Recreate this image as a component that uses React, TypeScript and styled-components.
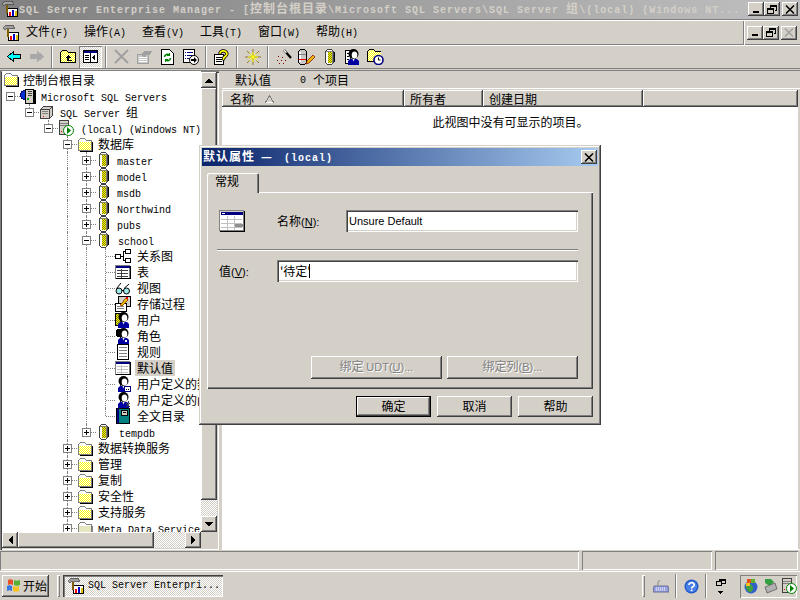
import React from "react";
import styled, { createGlobalStyle, css } from "styled-components";

const CJK = `"Noto Sans CJK SC", "Liberation Sans", sans-serif`;
const MONO = `"Liberation Mono", "Noto Sans CJK SC", monospace`;
const SANS = `"Liberation Sans", "Noto Sans CJK SC", sans-serif`;
const FACE = "#d4d0c8";
const DITHER = `repeating-conic-gradient(#ffffff 0 25%, #d4d0c8 0 50%) 0 0 / 2px 2px`;

const raised = css`
  background: ${FACE};
  box-shadow: inset -1px -1px 0 #404040, inset 1px 1px 0 #ffffff, inset -2px -2px 0 #808080;
`;
const sunken = css`
  box-shadow: inset 1px 1px 0 #808080, inset 2px 2px 0 #404040, inset -1px -1px 0 #ffffff, inset -2px -2px 0 ${FACE};
`;
const thinSunken = css`
  box-shadow: inset 1px 1px 0 #808080, inset -1px -1px 0 #ffffff;
`;

const Global = createGlobalStyle`
  html, body { margin: 0; padding: 0; background: ${FACE}; overflow: hidden; }
  * { box-sizing: border-box; }
`;

const Screen = styled.div`
  position: relative;
  width: 800px;
  height: 600px;
  overflow: hidden;
  display: flex;
  flex-direction: column;
  background: ${FACE};
  font-family: ${CJK};
  font-size: 12px;
  color: #000;
  line-height: 16px;
`;
const L = styled.span`
  font-family: ${MONO};
  font-size: 10px;
`;
const S = styled.span`
  font-family: ${SANS};
  font-size: 11px;
`;

/* ---------- window chrome ---------- */
const TitleBar = styled.div`
  height: 19px;
  flex: none;
  display: flex;
  align-items: center;
  padding: 0 2px 1px 2px;
  background: linear-gradient(to right, #808080, #c0c0c0);
`;
const TitleText = styled.div`
  flex: 1;
  margin-left: 1px;
  overflow: hidden;
  white-space: nowrap;
  font-weight: 700;
  letter-spacing: 1px;
  color: ${FACE};
`;
const CaptionGroup = styled.div`
  display: flex;
  align-items: center;
`;
const CapBtn = styled.div<{ $gap?: number }>`
  ${raised}
  width: 16px;
  height: 14px;
  margin-left: ${(p) => p.$gap ?? 0}px;
  display: flex;
  align-items: center;
  justify-content: center;
`;
const MenuBar = styled.div`
  height: 26px;
  flex: none;
  display: flex;
  align-items: center;
  padding-left: 3px;
  border-top: 1px solid #808080;
  box-shadow: inset 0 1px 0 #fff, inset 0 -1px 0 #808080;
`;
const MenuIcon = styled.div`
  width: 23px;
  display: flex;
`;
const MenuItem = styled.div`
  width: 58px;
  white-space: nowrap;
`;
const MenuSpacer = styled.div`
  flex: 1;
`;
const MdiButtons = styled.div`
  height: 24px;
  display: flex;
  align-items: center;
  padding: 0 3px 0 3px;
  border-left: 1px solid #808080;
  box-shadow: inset 1px 0 0 #fff;
`;
const ToolBar = styled.div`
  height: 23px;
  flex: none;
  display: flex;
  align-items: center;
  padding-left: 2px;
  box-shadow: inset 0 1px 0 #fff;
`;
const ToolBtn = styled.div<{ $pressed?: boolean }>`
  width: 23px;
  height: 22px;
  display: flex;
  align-items: center;
  justify-content: center;
  ${(p) =>
    p.$pressed &&
    css`
      background: ${DITHER};
      box-shadow: inset 1px 1px 0 #808080, inset -1px -1px 0 #fff;
    `}
`;
const ToolSep = styled.div`
  width: 8px;
  height: 22px;
  display: flex;
  justify-content: center;
  &::before {
    content: "";
    width: 2px;
    height: 100%;
    box-shadow: inset 1px 0 0 #808080, inset -1px 0 0 #fff;
  }
`;
const Etch = styled.div`
  height: 3px;
  flex: none;
  border-top: 1px solid #808080;
  border-bottom: 1px solid #808080;
`;
const Workspace = styled.div`
  height: 479px;
  flex: none;
  display: flex;
  gap: 3px;
`;

/* ---------- tree ---------- */
const LeftPane = styled.div`
  width: 219px;
  flex: none;
  display: grid;
  grid-template-columns: 199px 16px;
  grid-template-rows: 1fr 16px;
  padding: 0 2px 2px 2px;
  position: relative;
  ${sunken}
`;
const TreeView = styled.div`
  background: #fff;
  overflow: hidden;
  min-width: 0;
  min-height: 0;
`;
const RootRow = styled.div`
  height: 17px;
  display: flex;
  align-items: center;
  padding-left: 1px;
  white-space: nowrap;
  gap: 4px;
`;
const Row = styled.div`
  height: 16px;
  display: flex;
  align-items: center;
  white-space: nowrap;
  margin-left: -1px;
`;
const Cell = styled.div<{ $line?: "full" | "half" | "none"; $tick?: boolean }>`
  position: relative;
  width: 19px;
  height: 16px;
  flex: none;
  display: flex;
  align-items: center;
  justify-content: center;
  &::before {
    content: "";
    position: absolute;
    left: 9px;
    top: 0;
    height: ${(p) => (p.$line === "half" ? "8px" : "16px")};
    border-left: ${(p) => (p.$line && p.$line !== "none" ? "1px dotted #808080" : "0")};
  }
  &::after {
    content: "";
    position: absolute;
    left: 10px;
    top: 8px;
    width: 9px;
    border-top: ${(p) => (p.$tick ? "1px dotted #808080" : "0")};
  }
`;
const Box = styled.div`
  position: relative;
  z-index: 1;
  width: 9px;
  height: 9px;
  background: #fff;
  border: 1px solid #808080;
  display: flex;
  align-items: center;
  justify-content: center;
`;
const RowIcon = styled.div`
  width: 16px;
  height: 16px;
  flex: none;
  display: flex;
  align-items: center;
  justify-content: center;
`;
const RowLabel = styled.div<{ $selected?: boolean; $shift?: number }>`
  margin-left: ${(p) => 3 + (p.$shift ?? 0)}px;
  padding: 0 2px;
  height: 16px;
  background: ${(p) => (p.$selected ? FACE : "transparent")};
`;

/* ---------- scrollbars ---------- */
const VScroll = styled.div`
  display: flex;
  flex-direction: column;
  margin-top: 1px;
  background: ${DITHER};
`;
const HScroll = styled.div`
  display: flex;
  background: ${DITHER};
`;
const ScrollBtn = styled.div`
  ${raised}
  width: 16px;
  height: 16px;
  flex: none;
  display: flex;
  align-items: center;
  justify-content: center;
`;
const VThumb = styled.div`
  ${raised}
  height: 412px;
  flex: none;
`;
const HThumb = styled.div`
  ${raised}
  width: 136px;
  flex: none;
`;
const Grow = styled.div`
  flex: 1;
`;
const Corner = styled.div`
  background: ${FACE};
`;

/* ---------- list ---------- */
const RightPane = styled.div`
  flex: 1;
  display: flex;
  flex-direction: column;
  min-width: 0;
`;
const ListCaption = styled.div`
  height: 18px;
  flex: none;
  display: flex;
  align-items: center;
  padding-left: 13px;
  border-bottom: 1px solid #fff;
`;
const CaptionName = styled.div`
  width: 65px;
`;
const CaptionCount = styled.div`
  width: 13px;
`;
const ListFrame = styled.div`
  flex: 1;
  display: flex;
  flex-direction: column;
  padding: 1px 2px 0 0;
  border-bottom: 1px solid #fff;
`;
const HeaderRow = styled.div`
  height: 17px;
  flex: none;
  display: flex;
`;
const HeaderCell = styled.div<{ $w?: number; $pad?: number }>`
  ${raised}
  ${(p) => (p.$w ? `width: ${p.$w}px; flex: none;` : "flex: 1;")}
  display: flex;
  align-items: center;
  gap: 11px;
  padding-left: ${(p) => p.$pad ?? 6}px;
  white-space: nowrap;
`;
const ListBody = styled.div`
  flex: 1;
  background: #fff;
  padding: 7px 0 0 1px;
  text-align: center;
`;

/* ---------- status + taskbar ---------- */
const StatusBar = styled.div`
  height: 21px;
  flex: none;
  display: flex;
  gap: 3px;
  padding: 1px 2px 1px 0;
`;
const StatusPanel = styled.div<{ $w?: number }>`
  ${(p) => (p.$w ? `width: ${p.$w}px; flex: none;` : "flex: 1;")}
  ${thinSunken}
`;
const Taskbar = styled.div`
  flex: 1;
  display: flex;
  align-items: center;
  padding: 2px 3px 4px 2px;
  border-top: 1px solid #fff;
`;
const StartButton = styled.div`
  ${raised}
  width: 47px;
  height: 22px;
  flex: none;
  display: flex;
  align-items: center;
  padding: 0 0 1px 3px;
`;
const Grip = styled.div<{ $l: number; $r: number }>`
  width: 3px;
  height: 22px;
  flex: none;
  margin: 0 ${(p) => p.$r}px 0 ${(p) => p.$l}px;
  box-shadow: inset 1px 1px 0 #fff, inset -1px -1px 0 #808080;
`;
const TaskButton = styled.div`
  width: 160px;
  height: 22px;
  flex: none;
  display: flex;
  align-items: center;
  gap: 4px;
  padding-left: 5px;
  background: ${DITHER};
  box-shadow: inset 1px 1px 0 #404040, inset 2px 2px 0 #808080, inset -1px -1px 0 #fff;
  white-space: nowrap;
  overflow: hidden;
`;
const TaskSpacer = styled.div`
  flex: 1;
`;
const TrayIcon = styled.div`
  width: 16px;
  height: 16px;
  flex: none;
  display: flex;
  align-items: center;
  justify-content: center;
`;
const TrayDivider = styled.div`
  width: 2px;
  height: 24px;
  flex: none;
  margin: 0 6px;
  box-shadow: inset 1px 0 0 #808080, inset -1px 0 0 #fff;
`;
const Tray = styled.div`
  ${thinSunken}
  width: 57px;
  height: 23px;
  flex: none;
  margin-left: 11px;
  display: flex;
  align-items: center;
  padding-left: 3px;
  gap: 3px;
`;

/* ---------- dialog ---------- */
const Dialog = styled.div`
  background: ${FACE};
  box-shadow: inset -1px -1px 0 #404040, inset 1px 1px 0 ${FACE}, inset -2px -2px 0 #808080, inset 2px 2px 0 #fff;
  position: absolute;
  left: 199px;
  top: 145px;
  width: 402px;
  height: 280px;
  padding: 3px 3px 0;
  display: flex;
  flex-direction: column;
  font-family: ${CJK};
`;
const DialogTitle = styled.div`
  height: 18px;
  flex: none;
  display: flex;
  align-items: center;
  justify-content: space-between;
  padding: 0 1px 0 1px;
  background: linear-gradient(to right, #0a246a, #a6caf0);
  color: #fff;
  font-weight: 700;
  letter-spacing: 1px;
  white-space: nowrap;
`;
const TitleDash = styled.span`
  margin: 0 11px 0 6px;
`;
const Tabs = styled.div`
  margin: 7px 5px 0;
  display: flex;
  flex-direction: column;
`;
const Tab = styled.div`
  position: relative;
  z-index: 1;
  width: 52px;
  height: 20px;
  margin-bottom: -1px;
  padding-left: 8px;
  background: ${FACE};
  border-radius: 2px 2px 0 0;
  box-shadow: inset 1px 1px 0 #fff, inset -1px 0 0 #404040, inset -2px 0 0 #808080;
`;
const TabPanel = styled.div`
  height: 197px;
  display: flex;
  flex-direction: column;
  padding: 18px 15px 10px 12px;
  box-shadow: inset 1px 1px 0 #fff, inset -1px -1px 0 #404040, inset -2px -2px 0 #808080;
`;
const FieldRow = styled.div`
  display: flex;
  align-items: center;
  height: 22px;
`;
const FieldIcon = styled.div`
  width: 58px;
  flex: none;
  display: flex;
`;
const FieldLabel = styled.div<{ $w: number }>`
  width: ${(p) => p.$w}px;
  flex: none;
  white-space: nowrap;
`;
const TextField = styled.div`
  ${sunken}
  flex: 1;
  height: 22px;
  background: #fff;
  display: flex;
  align-items: center;
  padding: 0 3px;
  white-space: nowrap;
`;
const Caret = styled.span`
  display: inline-block;
  width: 1px;
  height: 14px;
  margin-left: -2px;
  background: #000;
`;
const Rule = styled.div`
  height: 2px;
  flex: none;
  margin: 17px 0 9px -2px;
  background: linear-gradient(#808080 50%, #fff 50%);
`;
const Spacer = styled.div`
  flex: 1;
`;
const BindRow = styled.div`
  display: flex;
  justify-content: flex-end;
  gap: 5px;
`;
const Button = styled.button<{ $w: number; $h: number; $disabled?: boolean; $default?: boolean }>`
  ${raised}
  width: ${(p) => p.$w}px;
  height: ${(p) => p.$h}px;
  padding: 0 0 2px;
  border: ${(p) => (p.$default ? "1px solid #000" : "0")};
  font-family: ${CJK};
  font-size: 12px;
  line-height: 14px;
  color: ${(p) => (p.$disabled ? "#808080" : "#000")};
  text-shadow: ${(p) => (p.$disabled ? "1px 1px 0 #fff" : "none")};
`;
const DialogFooter = styled.div`
  display: flex;
  justify-content: flex-end;
  gap: 6px;
  margin: 7px 5px 0 0;
`;

/* ---------- icons ---------- */
const SvgBase = styled.svg`
  display: block;
  flex: none;
`;
const Svg: React.FC<{ w: number; h: number; children: React.ReactNode }> = ({ w, h, children }) => (
  <SvgBase width={w} height={h} viewBox={`0 0 ${w} ${h}`} shapeRendering="crispEdges">
    {children}
  </SvgBase>
);

/* a rectangle of two colours in a one-pixel checker, as a 16-colour icon is dithered */
const Check = ({ x, y, w, h, a, b }: { x: number; y: number; w: number; h: number; a: string; b: string }) => {
  let d = "";
  for (let j = 0; j < h; j++) {
    for (let i = 0; i < w; i++) {
      if ((i + j) % 2 === 0) d += `M${x + i} ${y + j}h1v1h-1z`;
    }
  }
  return (
    <>
      <rect x={x} y={y} width={w} height={h} fill={a} />
      <path d={d} fill={b} />
    </>
  );
};

const Folder = ({ gray }: { gray?: boolean }) => (
  <Svg w={16} h={15}>
    <path d="M1.5 3.5l2-2h4l2 2h4.5v10H1.5z" fill="#fff" stroke="#808080" />
    {gray ? (
      <rect x="2" y="5" width="12" height="8" fill="#e6e6c0" />
    ) : (
      <Check x={2} y={5} w={12} h={8} a="#ffff00" b="#ffffff" />
    )}
    <path d="M2.5 4.5H9" stroke="#fff" />
    <path d="M15 4.5v10H2.5" fill="none" stroke={gray ? "#808080" : "#000"} />
  </Svg>
);
const Db = () => (
  <Svg w={12} h={16}>
    <path d="M1.5 2.5l2-2h4l2 2v11l-2 2h-4l-2-2z" fill="#fff" stroke="#404040" />
    <Check x={4} y={3} w={4} h={11} a="#ffff00" b="#808000" />
    <rect x="8" y="3" width="1" height="11" fill="#808080" />
    <path d="M10.5 3v10" stroke="#000" />
    <path d="M2 2.5h7" stroke="#808080" />
  </Svg>
);
const Hammer = () => (
  <Svg w={16} h={16}>
    <rect x="5.5" y="7.5" width="10" height="8" fill="#fff" stroke="#000" />
    <rect x="7" y="11" width="2" height="4" fill="#ff0000" />
    <rect x="10" y="9" width="2" height="6" fill="#0000c0" />
    <rect x="13" y="10" width="2" height="5" fill="#e0c000" />
    <path d="M0 3l3-3h7l2 3-2 1-2-1H4L2 5z" fill="#a0a0a0" stroke="#404040" strokeWidth="0.7" />
    <path d="M5 4v8" stroke="#806000" strokeWidth="2" />
  </Svg>
);
const MsSql = () => (
  <Svg w={16} h={15}>
    <circle cx="5" cy="6" r="4.5" fill="#0030d0" stroke="#000080" />
    <rect x="5.5" y="0.5" width="8" height="14" fill={FACE} stroke="#000" />
    <rect x="8" y="2" width="4" height="1" fill="#404040" />
    <rect x="8" y="4" width="4" height="1" fill="#404040" />
    <rect x="8" y="6" width="4" height="1" fill="#404040" />
    <rect x="14" y="1" width="2" height="14" fill="#000" />
    <rect x="7" y="9" width="2" height="2" fill="#00a000" />
  </Svg>
);
const Server = () => (
  <Svg w={16} h={16}>
    <rect x="1.5" y="0.5" width="9" height="14" fill={FACE} stroke="#404040" />
    <rect x="2" y="3" width="8" height="1" fill="#808080" />
    <rect x="2" y="5" width="8" height="1" fill="#808080" />
    <rect x="3" y="11" width="1" height="1" fill="#f00" />
    <g shapeRendering="auto">
      <circle cx="10.5" cy="10.5" r="5" fill="#fff" stroke="#008000" />
      <path d="M9 7l4 3.5-4 3.5z" fill="#008000" />
    </g>
  </Svg>
);
const SqlGroup = () => (
  <Svg w={16} h={15}>
    <path d="M1.5 4.5l3-3h9v9l-3 3h-9z" fill={FACE} stroke="#404040" />
    <path d="M1.5 4.5h9v9M10.5 4.5l3-3" fill="none" stroke="#404040" />
    <rect x="3" y="6" width="6" height="1" fill="#808080" />
    <rect x="3" y="8" width="6" height="1" fill="#808080" />
    <rect x="4" y="11" width="1" height="1" fill="#f00" />
  </Svg>
);
const Diagram = () => (
  <Svg w={16} h={14}>
    <rect x="0.5" y="5.5" width="5" height="4" fill="#fff" stroke="#000" />
    <rect x="10.5" y="0.5" width="5" height="4" fill="#fff" stroke="#000" />
    <rect x="10.5" y="9.5" width="5" height="4" fill="#fff" stroke="#000" />
    <path d="M5 7h3M8 2.5v9M8 2.5h2M8 11.5h2" stroke="#000" fill="none" />
  </Svg>
);
const TableIco = ({ faint }: { faint?: boolean }) => (
  <Svg w={16} h={14}>
    <rect x="0.5" y="0.5" width="14" height="13" fill="#fff" stroke="#808080" />
    <path d="M15.5 1v13M1 13.5h15" stroke="#000" fill="none" />
    <rect x="1" y="1" width="14" height="2" fill="#000080" />
    <path d="M2 5.5h11M2 8.5h11M2 11.5h11M6.5 4v9" stroke={faint ? "#c0c0c0" : "#404040"} fill="none" />
  </Svg>
);
const DefaultBig = () => (
  <Svg w={26} h={22}>
    <rect x="0.5" y="0.5" width="24" height="20" fill="#fff" stroke="#808080" />
    <path d="M25.5 1v21M1 21.5h25" stroke="#000" fill="none" />
    <path d="M1 1h23" stroke={FACE} />
    <rect x="2" y="2" width="22" height="3" fill="#000080" />
    <rect x="3" y="3" width="3" height="1" fill="#fff" />
    <path d="M2 9.5h21M2 13.5h21M2 17.5h21M8.5 6v14M15.5 6v14" stroke="#c0c0c0" fill="none" />
    <rect x="16" y="14" width="8" height="3" fill="#909090" />
  </Svg>
);
const Glasses = () => (
  <Svg w={16} h={13}>
    <g shapeRendering="auto">
      <circle cx="4" cy="9" r="3" fill="#a0e8e8" stroke="#000" />
      <circle cx="11.5" cy="9" r="3" fill="#a0e8e8" stroke="#000" />
      <path d="M7 8.5h1.5M1.5 6.5L6 1M9 6.5L14 2" stroke="#000" fill="none" />
    </g>
  </Svg>
);
const Proc = () => (
  <Svg w={16} h={16}>
    <rect x="3.5" y="0.5" width="12" height="10" fill={FACE} stroke="#000" />
    <rect x="0.5" y="7.5" width="11" height="8" fill="#fff" stroke="#000" />
    <path d="M2 10h7M2 12h7" stroke="#808080" />
    <path d="M5 9l6-7 2 2-6 6z" fill="#e0c000" stroke="#800000" strokeWidth="0.6" />
    <rect x="11" y="1" width="2" height="2" fill="#f00" />
  </Svg>
);
const Head = () => (
  <g shapeRendering="auto">
    <path d="M3 16v-4l2-2h7l2 2v4z" fill="#0000a0" />
    <path d="M7.5 10l1 2.5 1-2.5z" fill="#fff" />
    <ellipse cx="8.5" cy="5" rx="5" ry="5" fill="#000" />
    <path d="M5 10c1-2 0-4 0-5l1 2v3z" fill="#000" />
    <ellipse cx="9.5" cy="6" rx="2.8" ry="3.6" fill="#fff" />
  </g>
);
const UserIco = () => (
  <Svg w={16} h={16}>
    <rect x="0.5" y="1.5" width="6" height="12" fill="#fff" stroke="#000" />
    <Check x={1} y={2} w={5} h={11} a="#ffff00" b="#808000" />
    <Head />
  </Svg>
);
const RoleIco = () => (
  <Svg w={16} h={16}>
    <ellipse cx="5" cy="5" rx="4.5" ry="4.5" fill="#000" />
    <Head />
    <rect x="10" y="12" width="2" height="2" fill="#fff" />
  </Svg>
);
const RuleIco = () => (
  <Svg w={14} h={16}>
    <rect x="1.5" y="0.5" width="11" height="15" fill="#fff" stroke="#000" />
    <path d="M3 3.5h8M3 6.5h8M3 9.5h8M3 12.5h8" stroke="#808080" />
  </Svg>
);
const TypeIco = () => (
  <Svg w={16} h={16}>
    <Head />
    <rect x="9.5" y="10.5" width="6" height="5" fill="#fff" stroke="#000080" />
    <path d="M11 13h1M13 13h1" stroke="#000" />
  </Svg>
);
const FuncIco = () => (
  <Svg w={16} h={16}>
    <Head />
    <path d="M11 11l4 4M15 11l-4 4M13 9v2" stroke="#404040" />
  </Svg>
);
const Catalog = () => (
  <Svg w={15} h={16}>
    <rect x="0.5" y="0.5" width="13" height="15" fill="#008080" stroke="#000" />
    <rect x="1" y="1" width="2" height="14" fill="#000080" />
    <rect x="5.5" y="2.5" width="6" height="5" fill={FACE} stroke="#000" />
    <rect x="7" y="4" width="3" height="1" fill="#000" />
  </Svg>
);
const Minus = () => (
  <Svg w={7} h={7}>
    <path d="M1 3.5h5" stroke="#000" />
  </Svg>
);
const Plus = () => (
  <Svg w={7} h={7}>
    <path d="M1 3.5h5M3.5 1v5" stroke="#000" />
  </Svg>
);

/* caption glyphs */
const GMin = () => (
  <Svg w={10} h={9}>
    <rect x="2" y="6" width="6" height="2" fill="#000" />
  </Svg>
);
const GRestore = () => (
  <Svg w={10} h={9}>
    <path d="M3.5 2.5v-2h6v5h-2M3 1h6" fill="none" stroke="#000" />
    <rect x="0.5" y="3.5" width="6" height="5" fill="none" stroke="#000" />
    <path d="M1 4.5h5" stroke="#000" />
  </Svg>
);
const GClose = ({ off }: { off?: boolean }) => (
  <Svg w={10} h={9}>
    <g shapeRendering="auto" stroke={off ? "#a0a0a0" : "#000"} strokeWidth="1.5">
      <path d="M1 0.5l8 8M9 0.5l-8 8" />
    </g>
  </Svg>
);
const TriUp = () => (
  <Svg w={8} h={5}>
    <path d="M4 0l4 5H0z" fill="#000" />
  </Svg>
);
const TriDown = () => (
  <Svg w={8} h={5}>
    <path d="M0 0h8L4 5z" fill="#000" />
  </Svg>
);
const TriLeft = () => (
  <Svg w={5} h={8}>
    <path d="M5 0v8L0 4z" fill="#000" />
  </Svg>
);
const TriRight = () => (
  <Svg w={5} h={8}>
    <path d="M0 0v8l5-4z" fill="#000" />
  </Svg>
);
const SortUp = () => (
  <Svg w={9} h={8}>
    <path d="M4.5 0.5l4 7h-8z" fill="none" stroke="#808080" />
    <path d="M8 7.5H0.5" stroke="#fff" />
  </Svg>
);

/* toolbar icons */
const TBack = () => (
  <Svg w={14} h={11}>
    <path d="M6.5 0.5v3h7v4h-7v3L.5 5.5z" fill="#00ffff" stroke="#000" strokeWidth="1" />
  </Svg>
);
const TForward = () => (
  <Svg w={14} h={11}>
    <path d="M7.5 0.5v3h-7v4h7v3l6-5z" fill="#a8a8a8" stroke="#a8a8a8" />
  </Svg>
);
const TUp = () => (
  <Svg w={16} h={15}>
    <path d="M0.5 3.5l2-2h4l2 2h6.5v10H0.5z" fill="#ffff80" stroke="#000" />
    <Check x={1} y={4} w={14} h={9} a="#ffff00" b="#ffffff" />
    <path d="M8 6L5 9h2v3h5v-1H9V9h2z" fill="#000" />
  </Svg>
);
const TPanes = () => (
  <Svg w={15} h={13}>
    <rect x="0.5" y="0.5" width="14" height="12" fill="#fff" stroke="#000" />
    <rect x="1" y="1" width="13" height="2" fill="#000080" />
    <path d="M7.5 3v9" stroke="#000" />
    <path d="M2 5.5h4M2 7.5h4M2 9.5h4" stroke="#000" />
    <path d="M12 5v5L9 7.5z" fill="#000" />
  </Svg>
);
const TDelete = () => (
  <Svg w={15} h={15}>
    <g shapeRendering="auto" stroke="#a0a0a0" strokeWidth="2">
      <path d="M1 1l13 13M14 1L1 14" />
    </g>
  </Svg>
);
const TProps = () => (
  <Svg w={16} h={14}>
    <rect x="0.5" y="4.5" width="11" height="9" fill="#c8c8c8" stroke="#a0a0a0" />
    <path d="M2 7h8M2 9h8M2 11h8" stroke="#fff" />
    <path d="M4 4l3-3h8l-2 4H9v2H6z" fill="#a0a0a0" />
  </Svg>
);
const TRefresh = () => (
  <Svg w={13} h={16}>
    <path d="M0.5 0.5h8l4 4v11H0.5z" fill="#fff" stroke="#000" />
    <g shapeRendering="auto" fill="none" stroke="#008000" strokeWidth="1.6">
      <path d="M3.5 8a3 3 0 0 1 5-2" />
      <path d="M9.5 9a3 3 0 0 1-5 2" />
    </g>
    <path d="M9 3v4H6zM4 14v-4h3z" fill="#008000" />
  </Svg>
);
const TExport = () => (
  <Svg w={16} h={16}>
    <rect x="0.5" y="0.5" width="11" height="13" fill="#fff" stroke="#000" />
    <path d="M2 3.5h1M4 3.5h6M2 6.5h1M4 6.5h6M2 9.5h1M4 9.5h3" stroke="#000080" />
    <g shapeRendering="auto">
      <circle cx="11" cy="11" r="4.5" fill="#fff" stroke="#000" />
      <path d="M8 10h3V8l3 3-3 3v-2H8z" fill="#000" />
    </g>
  </Svg>
);
const THelp = () => (
  <Svg w={15} h={16}>
    <path d="M0.5 5.5h9v10h-9z" fill="#fff" stroke="#000" />
    <path d="M2 8h6M2 10h6M2 12h6" stroke="#000" />
    <g shapeRendering="auto" fill="none" strokeLinecap="round">
      <path d="M6 4a3.5 3 0 1 1 5 3.5c-1 .7-1.5 1.3-1.5 2.5" stroke="#000" strokeWidth="3.4" />
      <path d="M6 4a3.5 3 0 1 1 5 3.5c-1 .7-1.5 1.3-1.5 2.5" stroke="#ffff00" strokeWidth="1.8" />
    </g>
  </Svg>
);
const TStar = () => (
  <Svg w={16} h={16}>
    <g shapeRendering="auto">
      <path d="M8 0v16M0 8h16M2 2l12 12M14 2L2 14" stroke="#806000" strokeWidth="0.8" />
      <path d="M8 3v10M3 8h10M4.5 4.5l7 7M11.5 4.5l-7 7" stroke="#ffff00" strokeWidth="1" />
    </g>
  </Svg>
);
const TWizard = () => (
  <Svg w={16} h={16}>
    <g shapeRendering="auto">
      <path d="M8 1l7 8" stroke="#000" strokeWidth="2.2" />
      <path d="M8 1l2.4 2.7" stroke="#fff" strokeWidth="1.4" />
    </g>
    <path d="M2 7h1M6 8h1M1 11h1M5 11h1M9 11h1M3 14h1M7 14h1" stroke="#800000" />
  </Svg>
);
const TDbEdit = () => (
  <Svg w={17} h={16}>
    <path d="M0.5 2.5l2-2h4l2 2v11l-2 2h-4l-2-2z" fill="#c8c8c8" stroke="#000" />
    <rect x="1" y="3" width="2" height="10" fill="#fff" />
    <rect x="1" y="5" width="7" height="1" fill="#808080" />
    <rect x="1" y="10" width="7" height="1" fill="#f00" />
    <g shapeRendering="auto">
      <path d="M8 15l1-3 6-6 2 2-6 6z" fill="#e8b800" stroke="#800000" strokeWidth="0.7" />
    </g>
  </Svg>
);
const TUser = () => (
  <Svg w={16} h={16}>
    <rect x="0.5" y="1.5" width="10" height="13" fill="#fff" stroke="#000" />
    <path d="M2 4.5h2M2 7.5h2M2 10.5h2" stroke="#000" />
    <Head />
  </Svg>
);
const TFolderClock = () => (
  <Svg w={17} h={16}>
    <path d="M0.5 2.5l2-2h4l2 2h5v10H.5z" fill="#ffff80" stroke="#000" />
    <Check x={1} y={3} w={13} h={9} a="#ffff00" b="#ffffff" />
    <g shapeRendering="auto">
      <circle cx="11.5" cy="11" r="4.5" fill="#fff" stroke="#000080" strokeWidth="1.6" />
      <path d="M11.5 8.5V11h2" fill="none" stroke="#000" />
    </g>
  </Svg>
);

/* taskbar icons */
const WinFlag = () => (
  <Svg w={18} h={15}>
    <g shapeRendering="auto">
      <path d="M3 2c2-1 3-1 5 0v5c-2-1-3-1-5 0z" fill="#e8502a" />
      <path d="M9 2c2 1 4 1 6 0v5c-2 1-4 1-6 0z" fill="#58b030" />
      <path d="M2 8c2-1 3-1 5 0v5c-2-1-3-1-5 0z" fill="#3878e0" />
      <path d="M8 8c2 1 4 1 6 0v5c-2 1-4 1-6 0z" fill="#f8c020" />
    </g>
  </Svg>
);
const KbIco = () => (
  <Svg w={16} h={16}>
    <g shapeRendering="auto">
      <path d="M5 7V4c0-1 2-1 2-2" fill="none" stroke="#808080" />
      <path d="M1 8h14l1 6H0z" fill="#9aa4e0" stroke="#505888" strokeWidth="0.8" />
      <path d="M3 10h10M3 12h10" stroke="#fff" strokeDasharray="1 1" />
    </g>
  </Svg>
);
const HelpBall = () => (
  <Svg w={15} h={15}>
    <g shapeRendering="auto">
      <circle cx="7.5" cy="7.5" r="7" fill="#2058c8" />
      <circle cx="7.5" cy="7.5" r="5.6" fill="#4880e8" />
      <path d="M5 6a2.6 2.2 0 1 1 3.8 1.8C8 8.3 7.6 8.7 7.6 9.6" fill="none" stroke="#fff" strokeWidth="1.6" />
      <rect x="6.8" y="10.5" width="1.7" height="1.7" fill="#fff" />
    </g>
  </Svg>
);
const DeskIco = () => (
  <Svg w={10} h={16}>
    <rect x="0.5" y="3.5" width="5" height="4" fill="none" stroke="#000" />
    <path d="M3.5 3V1.5h6v4H6M3.5 2.5h6" fill="none" stroke="#000" />
    <path d="M1 13h7l-3.5 3z" fill="#000" />
  </Svg>
);
const GlobeIco = () => (
  <Svg w={16} h={16}>
    <g shapeRendering="auto">
      <circle cx="8" cy="9" r="6.5" fill="#3060c8" />
      <path d="M3 6c3-1 6 0 7 3s-2 6-4 5-4-5-3-8z" fill="#40a040" />
      <path d="M4 1h4v4H4z" fill="#e05020" />
      <path d="M8 1h4v4H8z" fill="#60b030" />
      <path d="M3 5h4v3H3z" fill="#f8c020" />
    </g>
  </Svg>
);
const NetIco = () => (
  <Svg w={15} h={16}>
    <g shapeRendering="auto">
      <path d="M2 1h6l3 3-3 3H5L2 5z" fill="#30a040" />
      <path d="M2 9l10-4 2 6-10 4z" fill="#b0b0b0" stroke="#505050" strokeWidth="0.7" />
    </g>
  </Svg>
);

/* ---------- data ---------- */
type Line = "full" | "half" | "none";
interface Node {
  guides: Line[];
  kind: "plus" | "minus" | "leaf";
  line?: Line;
  icon: React.ReactNode;
  label: React.ReactNode;
  selected?: boolean;
  shift?: number;
}
const D3: Line[] = ["none", "none", "none"];
const D4: Line[] = [...D3, "full"];
const D5: Line[] = [...D4, "full"];

const tree: Node[] = [
  { guides: [], kind: "minus", icon: <MsSql />, label: <L>Microsoft SQL Servers</L> },
  { guides: ["none"], kind: "minus", line: "half", icon: <SqlGroup />, label: <><L>SQL Server </L>组</> },
  { guides: ["none", "none"], kind: "minus", line: "half", icon: <Server />, label: <L>(local) (Windows NT)</L>, shift: 2 },
  { guides: D3, kind: "minus", line: "full", icon: <Folder />, label: "数据库" },
  { guides: D4, kind: "plus", line: "full", icon: <Db />, label: <L>master</L> },
  { guides: D4, kind: "plus", line: "full", icon: <Db />, label: <L>model</L> },
  { guides: D4, kind: "plus", line: "full", icon: <Db />, label: <L>msdb</L> },
  { guides: D4, kind: "plus", line: "full", icon: <Db />, label: <L>Northwind</L> },
  { guides: D4, kind: "plus", line: "full", icon: <Db />, label: <L>pubs</L> },
  { guides: D4, kind: "minus", line: "full", icon: <Db />, label: <L>school</L>, shift: 1 },
  { guides: D5, kind: "leaf", line: "full", icon: <Diagram />, label: "关系图", shift: 1 },
  { guides: D5, kind: "leaf", line: "full", icon: <TableIco />, label: "表", shift: 1 },
  { guides: D5, kind: "leaf", line: "full", icon: <Glasses />, label: "视图", shift: 1 },
  { guides: D5, kind: "leaf", line: "full", icon: <Proc />, label: "存储过程", shift: 1 },
  { guides: D5, kind: "leaf", line: "full", icon: <UserIco />, label: "用户", shift: 1 },
  { guides: D5, kind: "leaf", line: "full", icon: <RoleIco />, label: "角色", shift: 1 },
  { guides: D5, kind: "leaf", line: "full", icon: <RuleIco />, label: "规则", shift: 1 },
  { guides: D5, kind: "leaf", line: "full", icon: <TableIco faint />, label: "默认值", selected: true, shift: 1 },
  { guides: D5, kind: "leaf", line: "full", icon: <TypeIco />, label: "用户定义的数据类型", shift: 1 },
  { guides: D5, kind: "leaf", line: "full", icon: <FuncIco />, label: "用户定义的函数", shift: 1 },
  { guides: D5, kind: "leaf", line: "half", icon: <Catalog />, label: "全文目录", shift: 1 },
  { guides: [...D3, "full"], kind: "plus", line: "half", icon: <Db />, label: <L>tempdb</L>, shift: 2 },
  { guides: D3, kind: "plus", line: "full", icon: <Folder />, label: "数据转换服务" },
  { guides: D3, kind: "plus", line: "full", icon: <Folder />, label: "管理" },
  { guides: D3, kind: "plus", line: "full", icon: <Folder />, label: "复制" },
  { guides: D3, kind: "plus", line: "full", icon: <Folder />, label: "安全性" },
  { guides: D3, kind: "plus", line: "full", icon: <Folder />, label: "支持服务" },
  { guides: D3, kind: "plus", line: "half", icon: <Folder gray />, label: <L>Meta Data Services</L> },
];

const menus: [string, string][] = [
  ["文件", "(F)"],
  ["操作", "(A)"],
  ["查看", "(V)"],
  ["工具", "(T)"],
  ["窗口", "(W)"],
  ["帮助", "(H)"],
];

const TreeRow = ({ n }: { n: Node }) => (
  <Row>
    {n.guides.map((g, i) => (
      <Cell key={i} $line={g} />
    ))}
    <Cell $line={n.line ?? "none"} $tick>
      {n.kind !== "leaf" && <Box>{n.kind === "plus" ? <Plus /> : <Minus />}</Box>}
    </Cell>
    <RowIcon>{n.icon}</RowIcon>
    <RowLabel $selected={n.selected} $shift={n.shift}>{n.label}</RowLabel>
  </Row>
);

export default function App() {
  return (
    <Screen>
      <Global />
      <TitleBar>
        <Hammer />
        <TitleText>
          <L>SQL Server Enterprise Manager - [</L>控制台根目录<L>\Microsoft SQL Servers\SQL Server </L>组<L>\(local) (Windows NT...</L>
        </TitleText>
        <CaptionGroup>
          <CapBtn><GMin /></CapBtn>
          <CapBtn><GRestore /></CapBtn>
          <CapBtn $gap={2}><GClose /></CapBtn>
        </CaptionGroup>
      </TitleBar>
      <MenuBar>
        <MenuIcon><Hammer /></MenuIcon>
        {menus.map(([t, k]) => (
          <MenuItem key={t}>
            {t}
            <L>{k}</L>
          </MenuItem>
        ))}
        <MenuSpacer />
        <MdiButtons>
          <CapBtn><GMin /></CapBtn>
          <CapBtn><GRestore /></CapBtn>
          <CapBtn $gap={2}><GClose off /></CapBtn>
        </MdiButtons>
      </MenuBar>
      <ToolBar>
        <ToolBtn><TBack /></ToolBtn>
        <ToolBtn><TForward /></ToolBtn>
        <ToolSep />
        <ToolBtn><TUp /></ToolBtn>
        <ToolBtn $pressed><TPanes /></ToolBtn>
        <ToolSep />
        <ToolBtn><TDelete /></ToolBtn>
        <ToolBtn><TProps /></ToolBtn>
        <ToolBtn><TRefresh /></ToolBtn>
        <ToolBtn><TExport /></ToolBtn>
        <ToolSep />
        <ToolBtn><THelp /></ToolBtn>
        <ToolSep />
        <ToolBtn><TStar /></ToolBtn>
        <ToolSep />
        <ToolBtn><TWizard /></ToolBtn>
        <ToolBtn><TDbEdit /></ToolBtn>
        <ToolBtn><Db /></ToolBtn>
        <ToolBtn><TUser /></ToolBtn>
        <ToolBtn><TFolderClock /></ToolBtn>
      </ToolBar>
      <Etch />
      <Workspace>
        <LeftPane>
          <TreeView>
            <RootRow>
              <Folder />
              控制台根目录
            </RootRow>
            {tree.map((n, i) => (
              <TreeRow key={i} n={n} />
            ))}
          </TreeView>
          <VScroll>
            <ScrollBtn><TriUp /></ScrollBtn>
            <VThumb />
            <Grow />
            <ScrollBtn><TriDown /></ScrollBtn>
          </VScroll>
          <HScroll>
            <ScrollBtn><TriLeft /></ScrollBtn>
            <HThumb />
            <Grow />
            <ScrollBtn><TriRight /></ScrollBtn>
          </HScroll>
          <Corner />
        </LeftPane>
        <RightPane>
          <ListCaption>
            <CaptionName>默认值</CaptionName>
            <CaptionCount><L>0</L></CaptionCount>
            个项目
          </ListCaption>
          <ListFrame>
            <HeaderRow>
              <HeaderCell $w={182} $pad={8}>名称<SortUp /></HeaderCell>
              <HeaderCell $w={79}>所有者</HeaderCell>
              <HeaderCell $w={160}>创建日期</HeaderCell>
              <HeaderCell />
            </HeaderRow>
            <ListBody>此视图中没有可显示的项目。</ListBody>
          </ListFrame>
        </RightPane>
      </Workspace>
      <StatusBar>
        <StatusPanel />
        <StatusPanel $w={130} />
        <StatusPanel $w={83} />
      </StatusBar>
      <Taskbar>
        <StartButton>
          <WinFlag />
          开始
        </StartButton>
        <Grip $l={8} $r={3} />
        <TaskButton>
          <Hammer />
          <L>SQL Server Enterpri...</L>
        </TaskButton>
        <TaskSpacer />
        <Grip $l={0} $r={8} />
        <TrayIcon><KbIco /></TrayIcon>
        <TrayDivider />
        <TrayIcon><HelpBall /></TrayIcon>
        <TrayDivider />
        <TrayIcon><DeskIco /></TrayIcon>
        <Tray>
          <TrayIcon><GlobeIco /></TrayIcon>
          <TrayIcon><NetIco /></TrayIcon>
          <TrayIcon><Server /></TrayIcon>
        </Tray>
      </Taskbar>
      <Dialog>
        <DialogTitle>
          <span>默认属性<TitleDash>—</TitleDash><L>(local)</L></span>
          <CapBtn><GClose /></CapBtn>
        </DialogTitle>
        <Tabs>
          <Tab>常规</Tab>
          <TabPanel>
            <FieldRow>
              <FieldIcon><DefaultBig /></FieldIcon>
              <FieldLabel $w={69}>名称<S>(<u>N</u>):</S></FieldLabel>
              <TextField><S>Unsure Default</S></TextField>
            </FieldRow>
            <Rule />
            <FieldRow>
              <FieldLabel $w={58}>值<S>(<u>V</u>):</S></FieldLabel>
              <TextField>'待定'<Caret /></TextField>
            </FieldRow>
            <Spacer />
            <BindRow>
              <Button $w={131} $h={23} $disabled>绑定 <S>UDT(<u>U</u>)...</S></Button>
              <Button $w={131} $h={23} $disabled>绑定列<S>(<u>B</u>)...</S></Button>
            </BindRow>
          </TabPanel>
        </Tabs>
        <DialogFooter>
          <Button $w={75} $h={21} $default>确定</Button>
          <Button $w={75} $h={21}>取消</Button>
          <Button $w={75} $h={21}>帮助</Button>
        </DialogFooter>
      </Dialog>
    </Screen>
  );
}
